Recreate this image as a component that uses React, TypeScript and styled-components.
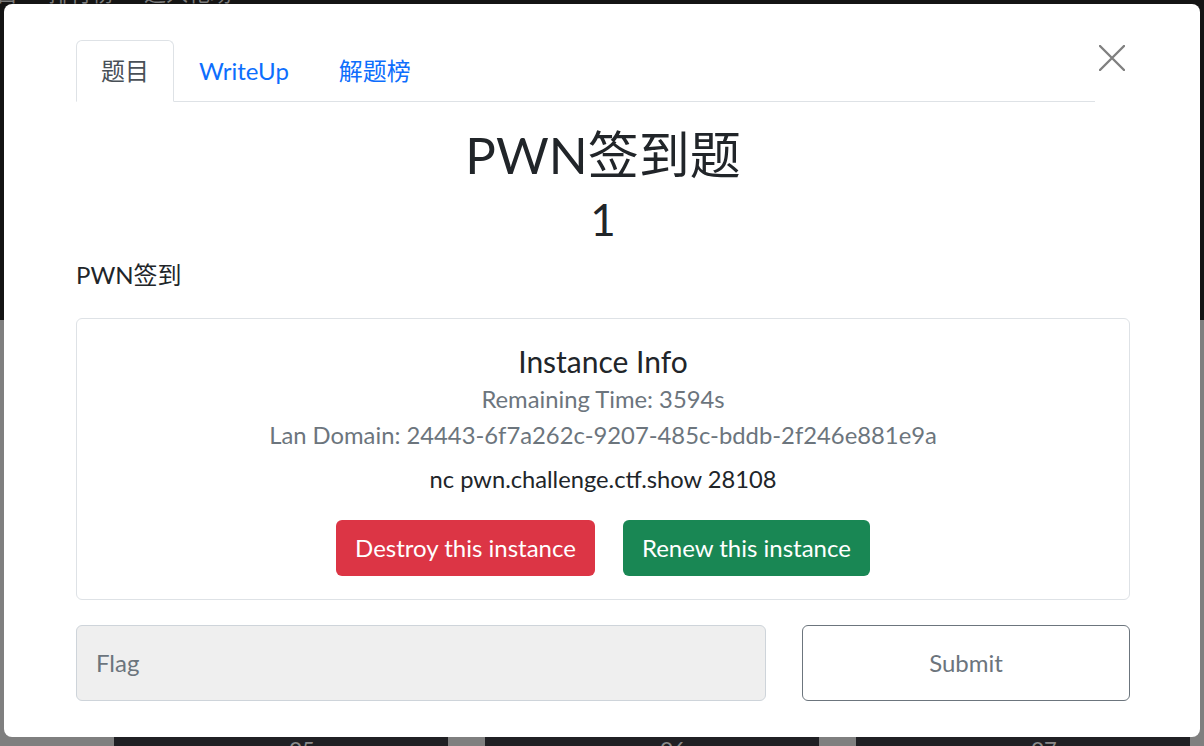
import styled, { createGlobalStyle } from 'styled-components'

const GlobalStyle = createGlobalStyle`
  html, body {
    margin: 0;
    padding: 0;
    height: 100%;
    overflow: hidden;
  }
  body {
    font-family: Lato, "Noto Sans CJK SC", sans-serif;
    background: #7f7f7f;
  }
`

const Page = styled.div`
  width: 1204px;
  height: 746px;
  display: flex;
  flex-direction: column;
  background: #7f7f7f;
  overflow: hidden;
`

const TopBar = styled.header`
  flex-shrink: 0;
  height: 320px;
  background: #141414;
  overflow: hidden;
`

const TopNav = styled.nav`
  display: flex;
  gap: 30px;
  margin: -22px 0 0 -26px;
  font-size: 22px;
  line-height: 30px;
  color: #7a7a7a;
`

const Board = styled.main`
  flex-shrink: 0;
  display: grid;
  grid-template-columns: repeat(3, 334px);
  column-gap: 37px;
  padding: 414px 0 0 114px;
`

const Tile = styled.div`
  height: 120px;
  background: #202024;
  color: #8a8a8a;
  font-size: 22px;
  line-height: 30px;
  text-align: center;
  padding: 0 0 0 42px;
`

const Modal = styled.div`
  position: fixed;
  top: 4px;
  left: 4px;
  width: 1196px;
  height: 733px;
  box-sizing: border-box;
  background: #fff;
  border-radius: 8px;
  padding: 36px 70px 36px 72px;
  display: flex;
  flex-direction: column;
  color: #212529;
`

const HeaderRow = styled.div`
  display: flex;
  align-items: flex-start;
`

const Tabs = styled.ul`
  flex: 1;
  display: flex;
  list-style: none;
  margin: 0;
  padding: 0;
  border-bottom: 1px solid #dee2e6;
`

const Tab = styled.li<{ $active?: boolean }>`
  margin-bottom: -1px;
  padding: 12px 24px;
  font-size: 24px;
  line-height: 36px;
  border: 1px solid ${p => (p.$active ? '#dee2e6' : 'transparent')};
  border-bottom-color: ${p => (p.$active ? '#fff' : 'transparent')};
  border-radius: 6px 6px 0 0;
  background: ${p => (p.$active ? '#fff' : 'transparent')};
  color: ${p => (p.$active ? '#495057' : '#0d6efd')};
`

const CloseButton = styled.button`
  width: 35px;
  height: 26px;
  padding: 0 0 0 4px;
  margin-top: 5px;
  border: 0;
  background: none;
  display: flex;
  align-items: center;
  justify-content: flex-start;
`

const Title = styled.h1`
  margin: 22px 0 0;
  text-align: center;
  font-size: 51px;
  line-height: 1.2;
  font-weight: 400;
`

const Score = styled.div`
  margin-top: 8px;
  text-align: center;
  font-size: 44px;
  line-height: 1.2;
`

const Description = styled.p`
  margin: 11px 0 25px;
  font-size: 24px;
  line-height: 36px;
`

const Card = styled.section`
  border: 1px solid #dee2e6;
  border-radius: 6px;
  padding: 24px 24px 23px;
  display: flex;
  flex-direction: column;
  align-items: center;
`

const CardTitle = styled.h5`
  margin: 0 0 2px;
  font-size: 30px;
  line-height: 36px;
  font-weight: 400;
`

const Muted = styled.div`
  font-size: 23.8px;
  line-height: 36px;
  color: #6c757d;
`

const Command = styled.div`
  margin-top: 8px;
  font-size: 23.7px;
  line-height: 36px;
`

const Actions = styled.div`
  display: flex;
  gap: 28px;
  margin-top: 23px;
`

const ActionButton = styled.button<{ $tone: 'danger' | 'success' }>`
  border: 1px solid transparent;
  border-radius: 6px;
  padding: 9px 18px;
  font-family: inherit;
  font-size: 24px;
  line-height: 36px;
  color: #fff;
  background: ${p => (p.$tone === 'danger' ? '#dc3545' : '#198754')};
`

const FlagRow = styled.form`
  display: grid;
  grid-template-columns: 690px 1fr;
  gap: 36px;
  margin-top: 25px;
`

const FlagInput = styled.input`
  box-sizing: border-box;
  height: 76px;
  padding: 19px;
  border: 1px solid #ced4da;
  border-radius: 6px;
  background: #efefef;
  font-family: inherit;
  font-size: 24px;
  line-height: 36px;
  color: #212529;
  &::placeholder {
    color: #6c757d;
  }
`

const SubmitButton = styled.button`
  height: 76px;
  border: 1px solid #6c757d;
  border-radius: 6px;
  background: #fff;
  font-family: inherit;
  font-size: 24px;
  color: #6c757d;
`

export default function App () {
  return (
    <>
      <GlobalStyle />
      <Page>
        <TopBar>
          <TopNav>
            <span>题目</span>
            <span>排行榜</span>
            <span>进入靶场</span>
          </TopNav>
        </TopBar>
        <Board>
          <Tile>05</Tile>
          <Tile>06</Tile>
          <Tile>07</Tile>
        </Board>
      </Page>
      <Modal>
        <HeaderRow>
          <Tabs>
            <Tab $active>题目</Tab>
            <Tab>WriteUp</Tab>
            <Tab>解题榜</Tab>
          </Tabs>
          <CloseButton type='button' aria-label='Close'>
            <svg width='26' height='26' viewBox='0 0 26 26'>
              <path d='M1 1 L25 25 M25 1 L1 25' stroke='#808080' strokeWidth='2.4' strokeLinecap='round' />
            </svg>
          </CloseButton>
        </HeaderRow>
        <Title>PWN签到题</Title>
        <Score>1</Score>
        <Description>PWN签到</Description>
        <Card>
          <CardTitle>Instance Info</CardTitle>
          <Muted>Remaining Time: 3594s</Muted>
          <Muted>Lan Domain: 24443-6f7a262c-9207-485c-bddb-2f246e881e9a</Muted>
          <Command>nc pwn.challenge.ctf.show 28108</Command>
          <Actions>
            <ActionButton type='button' $tone='danger'>Destroy this instance</ActionButton>
            <ActionButton type='button' $tone='success'>Renew this instance</ActionButton>
          </Actions>
        </Card>
        <FlagRow onSubmit={e => e.preventDefault()}>
          <FlagInput placeholder='Flag' />
          <SubmitButton type='submit'>Submit</SubmitButton>
        </FlagRow>
      </Modal>
    </>
  )
}
